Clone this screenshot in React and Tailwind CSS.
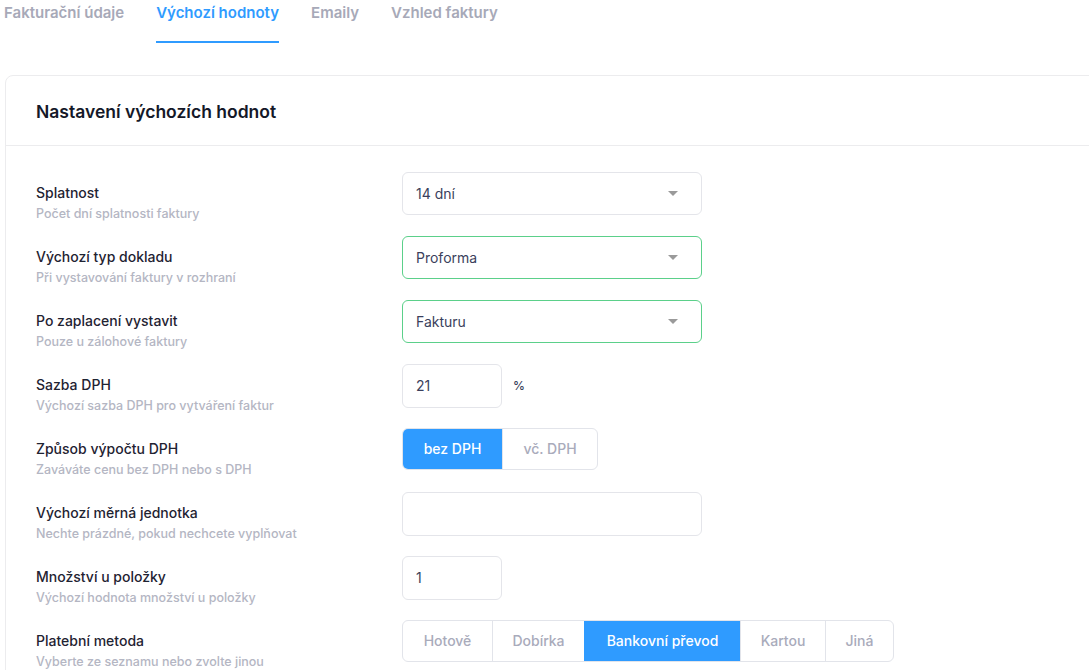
import React from 'react';

const font = { fontFamily: 'Inter, "Noto Sans", sans-serif' };

const Caret = () => (
    <svg width="10" height="5" viewBox="0 0 10 5" className="shrink-0">
        <path d="M0 0 L10 0 L5 5 Z" fill="#9a9a9a" />
    </svg>
);

const Select = ({ value, green }) => (
    <div className={`w-[300px] h-[43px] rounded-md border bg-white flex items-center justify-between pl-[13px] pr-[23px] text-sm text-[#3b3f5c] ${green ? 'border-[#5bd08a]' : 'border-[#e4e5ea]'}`}>
        <span>{value}</span>
        <Caret />
    </div>
);

const Row = ({ label, desc, children }) => (
    <div className="flex items-start h-[44px]">
        <div className="w-[366px] shrink-0 pt-[11px]">
            <div className="text-sm leading-5 font-medium text-[#1f2332]">{label}</div>
            <div className="mt-[3px] text-[12.5px] leading-4 font-medium text-[#b4b6c3]">{desc}</div>
        </div>
        {children}
    </div>
);

const Segmented = ({ items, active }) => (
    <div className="flex h-[42px] rounded-md border border-[#e2e4ea] overflow-hidden bg-white">
        {items.map((it, i) => (
            <div
                key={it.label}
                className={`flex items-center justify-center text-sm font-medium ${it.w} ${i > 0 ? 'border-l border-[#e2e4ea]' : ''} ${i === active ? 'bg-[#2f9bff] text-white border-l-[#2f9bff]' : 'text-[#a9abbb]'}`}
            >
                {it.label}
            </div>
        ))}
    </div>
);

export default function App() {
    const tabs = ['Fakturační údaje', 'Výchozí hodnoty', 'Emaily', 'Vzhled faktury'];

    return (
        <div className="min-h-screen bg-white overflow-hidden" style={font}>
            <div className="flex gap-[32px] pl-[4px]">
                {tabs.map((t, i) => (
                    <div
                        key={t}
                        className={`pt-[3px] pb-[18px] text-[15px] leading-5 font-semibold border-b-2 ${i === 1 ? 'text-[#2f9bff] border-[#2f9bff]' : 'text-[#a7a9b8] border-transparent'}`}
                    >
                        {t}
                    </div>
                ))}
            </div>

            <div className="ml-[5px] mt-[32px] w-[1200px] border border-[#ececee] rounded-tl-lg bg-white">
                <div className="h-[70px] flex items-center px-[30px] pt-[3px] border-b border-[#ececee]">
                    <h1 className="text-[17.5px] font-semibold text-[#141828]">Nastavení výchozích hodnot</h1>
                </div>

                <div className="px-[30px] pt-[26px] pb-10 flex flex-col gap-[20px]">
                    <Row label="Splatnost" desc="Počet dní splatnosti faktury">
                        <Select value="14 dní" />
                    </Row>
                    <Row label="Výchozí typ dokladu" desc="Při vystavování faktury v rozhraní">
                        <Select value="Proforma" green />
                    </Row>
                    <Row label="Po zaplacení vystavit" desc="Pouze u zálohové faktury">
                        <Select value="Fakturu" green />
                    </Row>
                    <Row label="Sazba DPH" desc="Výchozí sazba DPH pro vytváření faktur">
                        <div className="flex items-center gap-[11px]">
                            <div className="w-[100px] h-[44px] rounded-md border border-[#e4e5ea] flex items-center pl-[13px] text-sm text-[#3b3f5c]">21</div>
                            <span className="text-xs font-medium text-[#3b3f5c]">%</span>
                        </div>
                    </Row>
                    <Row label="Způsob výpočtu DPH" desc="Zaváváte cenu bez DPH nebo s DPH">
                        <Segmented
                            active={0}
                            items={[
                                { label: 'bez DPH', w: 'w-[99px]' },
                                { label: 'vč. DPH', w: 'w-[95px]' },
                            ]}
                        />
                    </Row>
                    <Row label="Výchozí měrná jednotka" desc="Nechte prázdné, pokud nechcete vyplňovat">
                        <div className="w-[300px] h-[44px] rounded-md border border-[#e4e5ea]"></div>
                    </Row>
                    <Row label="Množství u položky" desc="Výchozí hodnota množství u položky">
                        <div className="w-[100px] h-[44px] rounded-md border border-[#e4e5ea] flex items-center pl-[13px] text-sm text-[#3b3f5c]">1</div>
                    </Row>
                    <Row label="Platební metoda" desc="Vyberte ze seznamu nebo zvolte jinou">
                        <Segmented
                            active={2}
                            items={[
                                { label: 'Hotově', w: 'w-[89px]' },
                                { label: 'Dobírka', w: 'w-[92px]' },
                                { label: 'Bankovní převod', w: 'w-[156px]' },
                                { label: 'Kartou', w: 'w-[85px]' },
                                { label: 'Jiná', w: 'w-[68px]' },
                            ]}
                        />
                    </Row>
                </div>
            </div>
        </div>
    );
}
